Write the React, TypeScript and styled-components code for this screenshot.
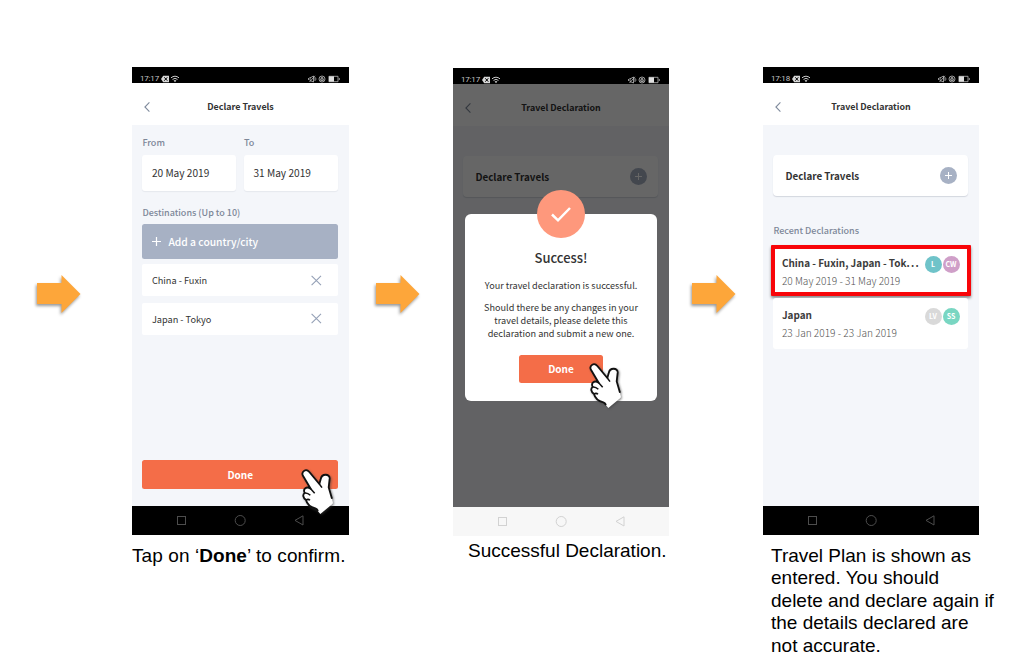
import React from "react";
import styled, { createGlobalStyle, css } from "styled-components";

const Global = createGlobalStyle`
  * { box-sizing: border-box; }
  body { margin: 0; background: #fff; }
  p { margin: 0; }
`;

const Page = styled.main`
  width: 1032px;
  height: 659px;
  overflow: hidden;
  display: flex;
  align-items: flex-start;
  padding: 67px 0 0 32px;
  font-family: "Noto Sans CJK SC", "Noto Sans", sans-serif;
  color: #333;
`;

const Step = styled.section<{ $w: number; $drop?: number }>`
  width: ${(p) => p.$w}px;
  flex: none;
  padding-top: ${(p) => p.$drop ?? 0}px;
`;

const ArrowSlot = styled.div<{ $w: number; $pad: number }>`
  width: ${(p) => p.$w}px;
  flex: none;
  padding: 205px 0 0 ${(p) => p.$pad}px;
  svg { display: block; overflow: visible; filter: drop-shadow(-1px 2px 1.5px rgba(0, 0, 0, 0.4)); }
`;

const Phone = styled.div<{ $w: number }>`
  width: ${(p) => p.$w}px;
  height: 468px;
  display: flex;
  flex-direction: column;
  position: relative;
  background: #f4f6fa;
`;

const StatusBar = styled.div`
  height: 16px;
  flex: none;
  background: #000;
  color: #c4c4c4;
  display: flex;
  align-items: center;
  justify-content: space-between;
  padding: 7px 9px 0 8px;
  font: 8px/9px Roboto, sans-serif;
  letter-spacing: -0.2px;
`;

const StatusGroup = styled.div`
  display: flex;
  align-items: center;
  gap: 2px;
  svg { display: block; }
`;

const Header = styled.div<{ $h: number }>`
  height: ${(p) => p.$h}px;
  flex: none;
  background: #fff;
  display: grid;
  grid-template-columns: 30px 1fr 30px;
  align-items: center;
  padding-top: 6px;
  svg { display: block; margin-left: 12px; }
`;

const HeaderTitle = styled.div`
  text-align: center;
  font-size: 8.9px;
  line-height: 12px;
  font-weight: 700;
`;

const Body = styled.div`
  flex: 1;
  min-height: 0;
  padding: 10px 11px 0 10.4px;
`;

const Label = styled.div`
  font-size: 9px;
  line-height: 14px;
  font-weight: 500;
  color: #7d8798;
`;

const SectionLabel = styled(Label)<{ $mt: number }>`
  margin-top: ${(p) => p.$mt}px;
`;

const Pair = styled.div`
  display: grid;
  grid-template-columns: 1fr 1fr;
  gap: 5px 7.5px;
  padding-top: 1px;
`;

const Field = styled.div`
  height: 36px;
  background: #fff;
  border-radius: 3px;
  box-shadow: 0 1px 1px rgba(120, 130, 150, 0.12);
  padding-left: 9.5px;
  font-size: 10.15px;
  line-height: 36px;
`;

const AddButton = styled.div`
  height: 34.5px;
  margin-top: 4.5px;
  background: #a7b1c4;
  border-radius: 2.5px;
  color: #fff;
  display: flex;
  align-items: center;
  gap: 7.5px;
  padding-left: 9.5px;
  font-size: 10.3px;
  font-weight: 500;
`;

const CityRow = styled.div`
  height: 32px;
  margin-bottom: 6.7px;
  background: #fff;
  border-radius: 2px;
  display: flex;
  align-items: center;
  justify-content: space-between;
  padding: 0 16px 0 9.5px;
  font-size: 9.2px;
`;

const CityList = styled.div`margin-top: 5.8px;`;

const DoneButton = styled.div<{ $w?: number }>`
  width: ${(p) => (p.$w ? p.$w + "px" : "100%")};
  height: ${(p) => (p.$w ? 28 : 29)}px;
  border-radius: 2.5px;
  background: #f46d48;
  color: #fff;
  display: flex;
  align-items: center;
  justify-content: center;
  font-size: 10px;
  font-weight: 700;
`;

const Footer = styled.div`padding: 0 11px 17px 10.4px;`;

const NavBar = styled.div<{ $light?: boolean }>`
  height: 29px;
  flex: none;
  background: ${(p) => (p.$light ? "#f7f7f7" : "#000")};
  color: ${(p) => (p.$light ? "#d2d2d2" : "#4d4d4d")};
  svg { display: block; }
`;

const Caption = styled.p<{ $left: number; $top: number; $ls?: number }>`
  padding: ${(p) => p.$top}px 0 0 ${(p) => p.$left}px;
  font: 19px/22.6px "Liberation Sans", Arial, sans-serif;
  letter-spacing: ${(p) => p.$ls ?? 0}px;
  color: #000;
  white-space: nowrap;
`;

const DeclareCard = styled.div`
  height: 41px;
  margin-top: 20px;
  border-radius: 4px;
  background: #fff;
  box-shadow: 0 1px 1px rgba(110, 120, 140, 0.25);
  display: flex;
  align-items: center;
  justify-content: space-between;
  padding: 0 11.2px 0 12px;
  font-size: 9.85px;
  font-weight: 700;
`;

const Shade = styled.div`
  position: absolute;
  inset: 16px 0 29px;
  background: rgba(0, 0, 0, 0.6);
`;

const Modal = styled.div`
  position: absolute;
  left: 12px;
  top: 146px;
  width: 192px;
  height: 187px;
  border-radius: 6px;
  background: #fff;
  display: flex;
  flex-direction: column;
  align-items: center;
  text-align: center;
`;

const CheckBadge = styled.div`
  width: 48px;
  height: 48px;
  margin-top: -24px;
  border-radius: 50%;
  background: #fe987c;
  svg { display: block; }
`;

const ModalTitle = styled.div`
  margin-top: 11px;
  font-size: 13px;
  line-height: 18px;
  font-weight: 500;
`;

const ModalText = styled.p<{ $mt: number }>`
  margin-top: ${(p) => p.$mt}px;
  font-size: 9.15px;
  line-height: 13.1px;
  white-space: nowrap;
`;

const ModalAction = styled.div`margin-top: 14px;`;

const DeclarationList = styled.div`margin-top: 7.5px;`;

const Declaration = styled.div<{ $marked?: boolean }>`
  height: 51px;
  background: #fff;
  border-radius: 3px;
  display: flex;
  justify-content: space-between;
  padding: 8.5px 8.5px 0 8.5px;
  ${(p) =>
    p.$marked &&
    css`
      height: 51px;
      margin: 0 -3px 2.3px -2.5px;
      border: 4px solid #f80509;
      border-radius: 1px;
      padding: 6px 7.5px 0 7px;
      box-shadow: 0 2px 3px rgba(0, 0, 0, 0.45);
    `}
`;

const Place = styled.div`
  font-size: 9.95px;
  line-height: 16px;
  font-weight: 700;
  color: #3c3c3c;
  white-space: nowrap;
`;

const Ellipsis = styled.span`letter-spacing: 1.3px;`;

const Dates = styled.div`
  font-size: 10.1px;
  line-height: 19px;
  font-weight: 300;
  color: #505050;
  white-space: nowrap;
`;

const Avatars = styled.div`
  display: flex;
  gap: 1px;
  padding-top: 1px;
`;

const Avatar = styled.div<{ $bg: string }>`
  width: 17px;
  height: 17px;
  border-radius: 50%;
  background: ${(p) => p.$bg};
  color: #fff;
  font-size: 7px;
  line-height: 17px;
  font-weight: 700;
  text-align: center;
`;

const Pointer = styled.div<{ $x: number; $y: number }>`
  position: absolute;
  left: ${(p) => p.$x}px;
  top: ${(p) => p.$y}px;
  svg { display: block; overflow: visible; filter: drop-shadow(1px 1.5px 1px rgba(60, 60, 60, 0.6)); }
`;

const Arrow = () => (
  <svg width="44" height="41" viewBox="0 0 44 41">
    <path d="M0 11H24.5V3L43.5 22L24.5 41V32H0Z" fill="#fda63a" />
  </svg>
);

const Hand = () => (
  <svg width="42" height="54" viewBox="0 0 126 162">
    <path
      d="M20 34C16 22 30 12 40 24L70 60L74 46C77 27 102 29 101 44L98 70L108 104C109 112 112 114 110 119L73 150C67 146 65 136 58 133C42 129 33 120 30 108C21 101 19 92 26 87C20 74 31 66 44 74Z"
      fill="#fff"
    />
    <path
      d="M66 141C64 137 61 134 58 133C42 129 33 120 30 108C21 101 19 92 26 87C20 74 31 66 44 74L20 34C16 22 30 12 40 24L70 60L74 46C77 27 102 29 101 44L98 70L108 104"
      fill="none" stroke="#111" strokeWidth="5.5" strokeLinejoin="round"
    />
    <path d="M44 74L56 88M26 87C32 86 38 89 43 94M30 108C35 105 39 106 42 109M70 60L78 71" stroke="#111" strokeWidth="4.5" fill="none" />
  </svg>
);

const Chevron = () => (
  <svg width="6" height="10" viewBox="0 0 6 10">
    <path d="M5.4 0.4L0.9 5L5.4 9.6" fill="none" stroke="#7f8b9d" strokeWidth="1.1" />
  </svg>
);

const Cross = () => (
  <svg width="11" height="11" viewBox="0 0 11 11">
    <path d="M0.6 0.8L10 10.2M10 0.8L0.6 10.2" stroke="#94a0b6" strokeWidth="1.1" />
  </svg>
);

const PlusCircle = () => (
  <svg width="17" height="17" viewBox="0 0 17 17">
    <circle cx="8.5" cy="8.5" r="8.5" fill="#a7b1c4" />
    <path d="M8.5 5V12M5 8.5H12" stroke="#fff" strokeWidth="1" />
  </svg>
);

const Status = ({ time }: { time: string }) => (
  <StatusBar>
    <StatusGroup>
      <span>{time}</span>
      <svg width="20" height="8" viewBox="0 0 20 8">
        <path d="M2.2 0.8H8V7.2H2.2L0 4Z" fill="#d8d8d8" />
        <path d="M3.3 2.3L6.3 5.7M6.3 2.3L3.3 5.7" stroke="#000" strokeWidth="1" />
        <path d="M10 2.8Q14 -0.4 18 2.8M11.5 4.4Q14 2.3 16.5 4.4" stroke="#c8c8c8" strokeWidth="1" fill="none" />
        <path d="M12.6 5.5L14 7.2L15.4 5.5Q14 4.5 12.6 5.5" fill="#c8c8c8" />
      </svg>
    </StatusGroup>
    <svg width="32" height="8" viewBox="0 0 32 8">
      <g fill="none" stroke="#bdbdbd" strokeWidth="0.8">
        <path d="M0.5 3V5M2 2V5.5L5.5 7V1L2 3M7 2V6M8 3.5V4.5M1.5 7L7 0.8" />
        <circle cx="14" cy="4" r="3" />
        <path d="M12.7 4H15.3V5.5H12.7ZM13.2 4V2.5H14.8V4" />
        <path d="M20.9 1.3H30V6.7H20.9Z M31.3 3V5" />
      </g>
      <path d="M21 1.3H26V6.7H21Z" fill="#e0e0e0" />
    </svg>
  </StatusBar>
);

const Nav = ({ light }: { light?: boolean }) => (
  <NavBar $light={light}>
    <svg width="216" height="29" viewBox="0 0 216 29" fill="none" stroke="currentColor" strokeWidth="1">
      <rect x="45.5" y="10.5" width="8" height="8" />
      <circle cx="108.2" cy="14.5" r="5" />
      <path d="M171 9.8V19L163 14.4Z" />
    </svg>
  </NavBar>
);

const TopBar = ({ title, h }: { title: string; h: number }) => (
  <Header $h={h}>
    <Chevron />
    <HeaderTitle>{title}</HeaderTitle>
  </Header>
);

export default function App() {
  return (
    <>
      <Global />
      <Page>
        <ArrowSlot $w={100} $pad={5}><Arrow /></ArrowSlot>
        <Step $w={217}>
          <Phone $w={217}>
            <Status time="17:17" />
            <TopBar title="Declare Travels" h={42} />
            <Body>
              <Pair>
                <Label>From</Label>
                <Label>To</Label>
                <Field>20 May 2019</Field>
                <Field>31 May 2019</Field>
              </Pair>
              <SectionLabel $mt={14.5}>Destinations (Up to 10)</SectionLabel>
              <AddButton>
                <svg width="9" height="9" viewBox="0 0 9 9">
                  <path d="M4.5 0V9M0 4.5H9" stroke="#fff" strokeWidth="1.2" />
                </svg>
                <span>Add a country/city</span>
              </AddButton>
              <CityList>
                <CityRow>China - Fuxin<Cross /></CityRow>
                <CityRow>Japan - Tokyo<Cross /></CityRow>
              </CityList>
            </Body>
            <Footer><DoneButton>Done</DoneButton></Footer>
            <Nav />
            <Pointer $x={164} $y={397}><Hand /></Pointer>
          </Phone>
          <Caption $left={0} $top={10} $ls={0.08}>Tap on ‘<b>Done</b>’ to confirm.</Caption>
        </Step>
        <ArrowSlot $w={104} $pad={26.5}><Arrow /></ArrowSlot>
        <Step $w={216} $drop={1}>
          <Phone $w={216}>
            <Status time="17:17" />
            <TopBar title="Travel Declaration" h={42} />
            <Body>
              <DeclareCard>Declare Travels<PlusCircle /></DeclareCard>
            </Body>
            <Nav light />
            <Shade />
            <Modal>
              <CheckBadge>
                <svg width="48" height="48" viewBox="0 0 48 48">
                  <path d="M15 24.5L21 30.3L33 18" fill="none" stroke="#fff" strokeWidth="2.5" />
                </svg>
              </CheckBadge>
              <ModalTitle>Success!</ModalTitle>
              <ModalText $mt={11.5}>Your travel declaration is successful.</ModalText>
              <ModalText $mt={9.7}>
                Should there be any changes in your<br />
                travel details, please delete this<br />
                declaration and submit a new one.
              </ModalText>
              <ModalAction><DoneButton $w={84}>Done</DoneButton></ModalAction>
            </Modal>
            <Pointer $x={131} $y={290}><Hand /></Pointer>
          </Phone>
          <Caption $left={15} $top={4}>Successful Declaration.</Caption>
        </Step>
        <ArrowSlot $w={94} $pad={23}><Arrow /></ArrowSlot>
        <Step $w={216}>
          <Phone $w={216}>
            <Status time="17:18" />
            <TopBar title="Travel Declaration" h={42} />
            <Body>
              <DeclareCard>Declare Travels<PlusCircle /></DeclareCard>
              <SectionLabel $mt={27.5}>Recent Declarations</SectionLabel>
              <DeclarationList>
                <Declaration $marked>
                  <div>
                    <Place>China - Fuxin, Japan - Tok<Ellipsis>...</Ellipsis></Place>
                    <Dates>20 May 2019 - 31 May 2019</Dates>
                  </div>
                  <Avatars><Avatar $bg="#6fc3c9">L</Avatar><Avatar $bg="#cf9fc8">CW</Avatar></Avatars>
                </Declaration>
                <Declaration>
                  <div>
                    <Place>Japan</Place>
                    <Dates>23 Jan 2019 - 23 Jan 2019</Dates>
                  </div>
                  <Avatars><Avatar $bg="#d9d9d9">LV</Avatar><Avatar $bg="#79d6c2">SS</Avatar></Avatars>
                </Declaration>
              </DeclarationList>
            </Body>
            <Nav />
          </Phone>
          <Caption $left={8} $top={9.5}>
            Travel Plan is shown as<br />
            entered. You should<br />
            delete and declare again if<br />
            the details declared are<br />
            not accurate.
          </Caption>
        </Step>
      </Page>
    </>
  );
}
